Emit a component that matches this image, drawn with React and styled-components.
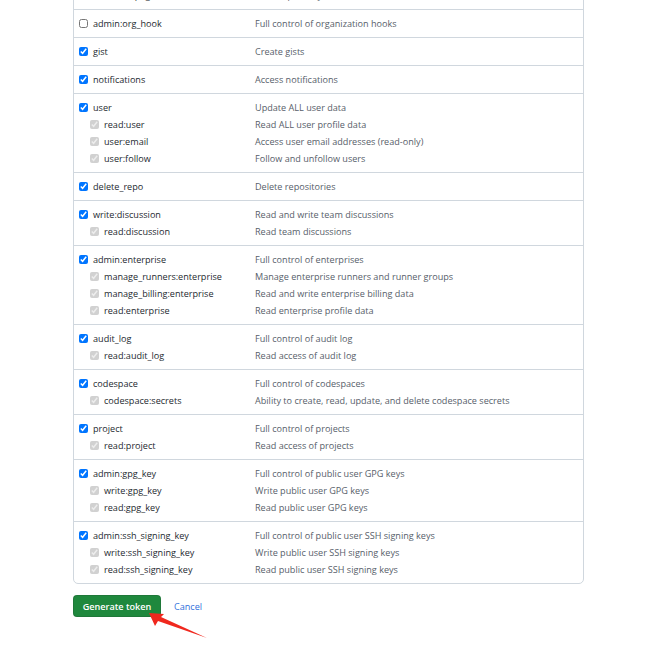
import styled, { createGlobalStyle } from "styled-components";

const GlobalStyle = createGlobalStyle`
	body {
		margin: 0;
		background: #ffffff;
		font-family: "Open Sans", "Liberation Sans", sans-serif;
		color: #24292f;
	}
`;

const Page = styled.div`
	padding: 0 70px 0 73px;
`;

const ScopeList = styled.ul`
	list-style: none;
	margin: -53px 0 0;
	padding: 0;
	width: 509px;
	border: 1px solid #d0d7de;
	border-radius: 5px;
`;

const Group = styled.li`
	padding: 5px 0;
	& + & {
		border-top: 1px solid #d0d7de;
	}
`;

const Line = styled.div`
	display: grid;
	grid-template-columns: 181px 1fr;
	height: 17px;
	align-items: center;
	font-size: 9.1px;
`;

const Name = styled.label`
	display: flex;
	align-items: center;
	gap: 5px;
	padding-left: ${(p) => (p.$sub ? "16px" : "5px")};
	color: #24292f;
	white-space: nowrap;
`;

const Box = styled.input`
	width: 9px;
	height: 9px;
	margin: 0;
	flex: none;
`;

const Desc = styled.span`
	color: #57606a;
	white-space: nowrap;
`;

const Actions = styled.div`
	position: relative;
	display: flex;
	align-items: center;
	gap: 13px;
	margin-top: 11px;
	padding-bottom: 40px;
`;

const PrimaryButton = styled.button`
	width: 88px;
	height: 22px;
	border: 1px solid rgba(31, 35, 40, 0.15);
	border-radius: 4px;
	background: #1f883d;
	color: #ffffff;
	font-family: "Open Sans", "Liberation Sans", sans-serif;
	font-size: 9.1px;
	font-weight: 600;
	padding: 0;
`;

const CancelLink = styled.a`
	color: #2f6fdb;
	font-size: 9.1px;
	text-decoration: none;
`;

const Pointer = styled.svg`
	position: absolute;
	left: 67px;
	top: 6px;
`;

const scopes = [
	{ name: "admin:repo_hook", desc: "Full control of repository hooks", checked: false, subs: [
		["write:repo_hook", "Write repository hooks"],
		["read:repo_hook", "Read repository hooks"],
	] },
	{ name: "admin:org_hook", desc: "Full control of organization hooks", checked: false, subs: [] },
	{ name: "gist", desc: "Create gists", checked: true, subs: [] },
	{ name: "notifications", desc: "Access notifications", checked: true, subs: [] },
	{ name: "user", desc: "Update ALL user data", checked: true, subs: [
		["read:user", "Read ALL user profile data"],
		["user:email", "Access user email addresses (read-only)"],
		["user:follow", "Follow and unfollow users"],
	] },
	{ name: "delete_repo", desc: "Delete repositories", checked: true, subs: [] },
	{ name: "write:discussion", desc: "Read and write team discussions", checked: true, subs: [
		["read:discussion", "Read team discussions"],
	] },
	{ name: "admin:enterprise", desc: "Full control of enterprises", checked: true, subs: [
		["manage_runners:enterprise", "Manage enterprise runners and runner groups"],
		["manage_billing:enterprise", "Read and write enterprise billing data"],
		["read:enterprise", "Read enterprise profile data"],
	] },
	{ name: "audit_log", desc: "Full control of audit log", checked: true, subs: [
		["read:audit_log", "Read access of audit log"],
	] },
	{ name: "codespace", desc: "Full control of codespaces", checked: true, subs: [
		["codespace:secrets", "Ability to create, read, update, and delete codespace secrets"],
	] },
	{ name: "project", desc: "Full control of projects", checked: true, subs: [
		["read:project", "Read access of projects"],
	] },
	{ name: "admin:gpg_key", desc: "Full control of public user GPG keys", checked: true, subs: [
		["write:gpg_key", "Write public user GPG keys"],
		["read:gpg_key", "Read public user GPG keys"],
	] },
	{ name: "admin:ssh_signing_key", desc: "Full control of public user SSH signing keys", checked: true, subs: [
		["write:ssh_signing_key", "Write public user SSH signing keys"],
		["read:ssh_signing_key", "Read public user SSH signing keys"],
	] },
];

function App() {
	return (
		<>
			<GlobalStyle />
			<Page>
				<ScopeList>
					{scopes.map((s) => (
						<Group key={s.name}>
							<Line>
								<Name>
									<Box type="checkbox" defaultChecked={s.checked} />
									{s.name}
								</Name>
								<Desc>{s.desc}</Desc>
							</Line>
							{s.subs.map(([name, desc]) => (
								<Line key={name}>
									<Name $sub>
										<Box type="checkbox" checked={s.checked} disabled readOnly />
										{name}
									</Name>
									<Desc>{desc}</Desc>
								</Line>
							))}
						</Group>
					))}
				</ScopeList>
				<Actions>
					<PrimaryButton>Generate token</PrimaryButton>
					<CancelLink href="#">Cancel</CancelLink>
					<Pointer width="75" height="45" viewBox="0 0 75 45">
						<polygon points="9,12 24,13 21,16 67,37 18,20 15,25" fill="#f0281e" />
					</Pointer>
				</Actions>
			</Page>
		</>
	);
}

export default App;
